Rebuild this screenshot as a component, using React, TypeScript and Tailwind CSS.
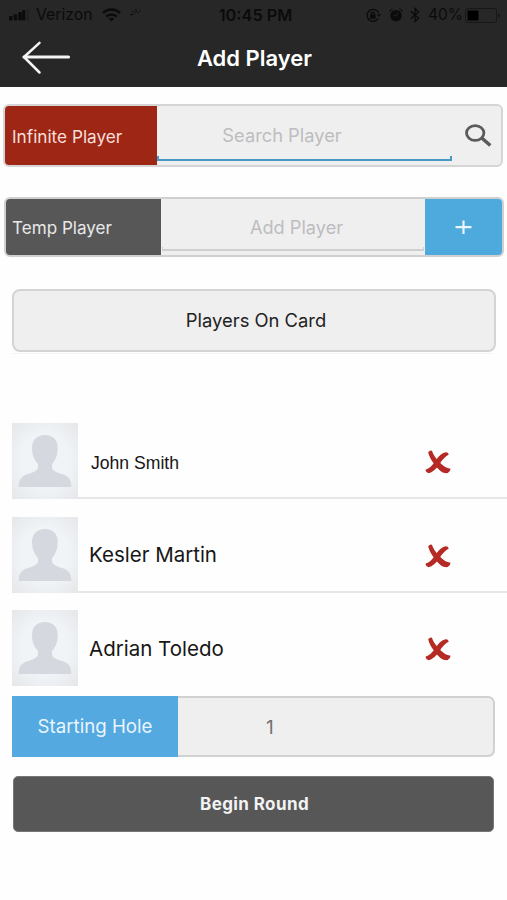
import { clsx } from "clsx"

const players = [
  { name: "John Smith", compact: true },
  { name: "Kesler Martin" },
  { name: "Adrian Toledo" },
]

function StatusBar() {
  return (
    <div className="flex h-[30px] items-center pl-[9px] pr-[5px] text-[#0b0b0b]">
      <div className="flex flex-1 items-center">
        <svg className="h-[12px] w-[20px]" viewBox="0 0 20 12" fill="currentColor">
          <rect x="0" y="7" width="3.5" height="4.5" rx="1" />
          <rect x="4.7" y="5.2" width="3.5" height="6.3" rx="1" />
          <rect x="9.3" y="3" width="3.5" height="8.5" rx="1" />
          <rect x="13.2" y="1" width="3" height="10.5" rx="1" />
          <rect x="17.5" y="0" width="3" height="11.5" rx="1" opacity="0.2" />
        </svg>
        <span className="ml-[7px] w-[57px] whitespace-nowrap text-[15.8px]">Verizon</span>
        <svg className="ml-[9px] h-[14px] w-[19px]" viewBox="0 0 19 14" fill="none" stroke="currentColor" strokeWidth="2.5">
          <path d="M1 5.2C5.8 0.3 13.2 0.3 18 5.2" />
          <path d="M4.3 8.6C7.2 5.7 11.8 5.7 14.7 8.6" />
          <path d="M9.5 13.6L6.6 10.7C8.2 9.3 10.8 9.3 12.4 10.7Z" fill="currentColor" stroke="none" />
        </svg>
        <svg className="ml-[9px] h-[14px] w-[12px]" viewBox="0 0 12 14" fill="none" stroke="currentColor" strokeWidth="1" strokeLinecap="round">
          <path d="M0.5 6.5H3M2 2.8L4.2 5M6 1.5V4.3M10 3L8 5" />
        </svg>
      </div>
      <span className="whitespace-nowrap text-[16.3px] font-semibold">10:45 PM</span>
      <div className="flex flex-1 items-center justify-end">
        <svg className="h-[15px] w-[15px]" viewBox="0 0 15 15" fill="none" stroke="currentColor" strokeWidth="1.3">
          <path d="M12.7 5A6 6 0 1 0 12.3 10.4" />
          <path d="M10.8 6.2H15L12.9 9Z" fill="currentColor" stroke="none" />
          <rect x="4" y="6.6" width="5.6" height="4.1" fill="currentColor" stroke="none" />
          <path d="M5.3 7V5.6A1.5 1.5 0 0 1 8.3 5.6V7" />
        </svg>
        <svg className="ml-[8px] h-[14px] w-[14px]" viewBox="0 0 14 14" fill="none" stroke="currentColor" strokeWidth="1.2">
          <circle cx="7" cy="7.6" r="5.7" fill="currentColor" stroke="none" />
          <path d="M0.8 3.8Q1.2 1.6 3.6 1M13.2 3.8Q12.8 1.6 10.4 1" />
          <path d="M9 5L7 8L4.7 7.6" stroke="#272727" strokeWidth="1" />
        </svg>
        <svg className="ml-[7px] h-[16px] w-[10px]" viewBox="0 0 10 16" fill="none" stroke="currentColor" strokeWidth="1.3">
          <path d="M0.8 4.3L8.6 11.3L5 14.6V1.4L8.6 4.7L0.8 11.7" />
        </svg>
        <span className="ml-[8px] w-[34px] whitespace-nowrap text-[15.5px]">40%</span>
        <svg className="ml-[3px] h-[15px] w-[37px]" viewBox="0 0 37 15">
          <rect x="0.5" y="0.5" width="31" height="14" rx="2.5" fill="none" stroke="#171717" />
          <rect x="2.5" y="2.5" width="11" height="10" rx="1" fill="#000" />
          <path d="M33 5V10Q35 9 35 7.5T33 5Z" fill="#171717" />
        </svg>
      </div>
    </div>
  )
}

function Avatar() {
  return (
    <svg className="h-[76px] w-[66px] shrink-0" viewBox="0 0 66 76">
      <defs>
        <radialGradient id="avatar-bg" cx="50%" cy="50%" r="72%">
          <stop offset="0.5" stopColor="#f1f4f7" />
          <stop offset="1" stopColor="#e4e6e8" />
        </radialGradient>
      </defs>
      <rect width="66" height="76" fill="url(#avatar-bg)" />
      <path
        d="M33 12C41 12 45.7 17 45.7 25C45.7 33 43 37.5 40 41V45C41 48 45 49.5 50 51C57 53 59.3 57 59.3 64H6.7C6.7 57 9 53 16 51C21 49.5 25 48 26 45V41C23 37.5 20 33 20 25C20 17 25 12 33 12Z"
        fill="#d5d9df"
      />
    </svg>
  )
}

function RemoveIcon() {
  return (
    <svg className="h-[24px] w-[26px]" viewBox="0 0 26 24" fill="#b52a24">
      <path d="M3.2 2.2Q5 0 7 0.8Q8.2 5.5 13.6 11.2Q19.5 18 25.6 18.8Q25.2 22 22.8 23.1C17.5 23.6 14.2 20.3 9.6 14.4Q4.5 8.5 3.2 2.2Z" />
      <path d="M23.8 4.5Q23 2 20.5 2.3Q15 3.8 10.6 10.6Q6 18.2 0.4 19.8Q0.8 22.6 3.6 23.3Q9.2 21.8 14.2 14.4Q18.5 7.5 23.8 4.5Z" />
    </svg>
  )
}

export default function App() {
  return (
    <div className="flex h-[900px] w-[507px] flex-col overflow-hidden bg-[#fefefe] font-['Inter',sans-serif]">
      {/* Header */}
      <header className="h-[87px] shrink-0 bg-[#272727]">
        <StatusBar />
        <div className="grid h-[56px] grid-cols-[1fr_auto_1fr] items-center">
          <svg className="ml-[22px] h-[34px] w-[49px]" viewBox="0 0 49 34" fill="none" stroke="#f4f4f4" strokeLinecap="round" strokeLinejoin="round">
            <path d="M17.5 1.8L2 16L17.5 31.5" strokeWidth="2.5" />
            <path d="M2 16H46.5" strokeWidth="3.2" />
          </svg>
          <h1 className="ml-[2px] whitespace-nowrap text-[22px] font-semibold text-white">Add Player</h1>
        </div>
      </header>

      {/* Search for an existing player */}
      <div className="ml-[3px] mt-[17px] flex h-[63px] w-[500px] shrink-0 overflow-hidden rounded-[6px] border-2 border-[#d5d5d5] bg-[#efefef]">
        <div className="flex w-[152px] items-center bg-[#9e2614] pl-[7px] pt-[3px] text-[17.2px] text-[#f7dfda]">Infinite Player</div>
        <div className="flex w-[295px] flex-col">
          <div className="flex h-[50px] items-center justify-center pt-[10px] text-[18.3px] text-[#bdbdbf]">
            <span className="ml-[-45px]">Search Player</span>
          </div>
          <div className="h-[5px] border-x-2 border-b-2 border-[#4698c6]" />
        </div>
        <svg className="ml-[13px] mt-[18px] h-[24px] w-[28px]" viewBox="0 0 28 24" fill="none" stroke="#5b5b5b">
          <ellipse cx="10.2" cy="9" rx="8.7" ry="7.4" strokeWidth="2.8" />
          <path d="M16.8 14L25.3 21.5" strokeWidth="3.5" />
        </svg>
      </div>

      {/* Temporary player */}
      <div className="ml-[4px] mt-[30px] flex h-[60px] w-[500px] shrink-0 overflow-hidden rounded-[6px] border-2 border-[#d0d0d0] bg-[#efefef]">
        <div className="flex w-[155px] items-center bg-[#575757] pl-[6px] pt-px text-[17.1px] text-[#e9e9e9]">Temp Player</div>
        <div className="flex w-[264px] flex-col px-[1px]">
          <div className="flex h-[48px] items-center justify-center pl-[7px] pt-[9px] text-[18.2px] text-[#bdbdbf]">Add Player</div>
          <div className="h-[4px] border-x border-b-2 border-[#cfcfcf]" />
        </div>
        <div className="flex flex-1 items-center justify-center bg-[#4ea9dc]">
          <svg className="h-[16px] w-[17px]" viewBox="0 0 17 16" stroke="#e8f6fd" strokeWidth="2.2">
            <path d="M0.5 8.2H16.5M8.5 1.5V15" />
          </svg>
        </div>
      </div>

      {/* Card heading */}
      <div className="ml-[12px] mt-[32px] flex h-[63px] w-[484px] shrink-0 items-center justify-center rounded-[8px] border-2 border-[#d4d4d4] bg-[#efefef] pl-[4px] text-[18.4px] text-[#222]">
        <span>Players On Card</span>
      </div>
      <div className="ml-[12px] mt-[1px] h-px w-[481px] shrink-0 bg-[#f5f5f5]" />

      {/* Players */}
      <ul className="mt-[69px] shrink-0 pl-[12px]">
        {players.map((player, i) => (
          <li key={player.name} className={clsx("flex h-[76px]", i < 2 && "mb-[17.5px]")}>
            <Avatar />
            <div className={clsx("flex flex-1 items-center justify-between pr-[56px]", i < 2 ? "border-b-2 border-[#e7e7e8] pt-[4px]" : "pt-[2px]")}>
              <span
                className={clsx(
                  "whitespace-nowrap text-[#161616]",
                  player.compact ? "ml-[13px] pt-[3px] font-['Liberation_Sans',sans-serif] text-[17.6px]" : "ml-[11px] text-[20.5px]",
                )}
              >
                {player.name}
              </span>
              <RemoveIcon />
            </div>
          </li>
        ))}
      </ul>

      {/* Starting hole */}
      <div className="ml-[12px] mt-[10px] flex h-[61px] w-[483px] shrink-0">
        <div className="flex w-[166px] items-center justify-center bg-[#54a9e0] pt-[2px] text-[18.7px] text-[#e9f5fd]">Starting Hole</div>
        <div className="flex flex-1 items-center rounded-r-[7px] border-2 border-l-0 border-[#d1d1d1] bg-[#efefef] pl-[88px] pt-[3px] text-[19px] text-[#727272]">1</div>
      </div>

      <button className="ml-[13px] mt-[19px] h-[56px] w-[481px] shrink-0 rounded-[5px] border border-[#777] bg-[#575757] pl-[2px] pt-[2px] text-[17px] font-bold tracking-[0.4px] text-[#f3f3f3]">
        Begin Round
      </button>
    </div>
  )
}
